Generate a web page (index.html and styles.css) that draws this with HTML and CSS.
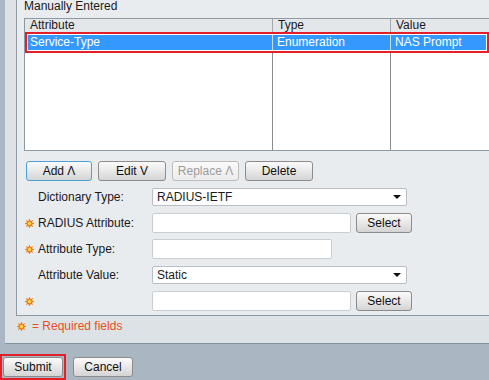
FILE: index.html
```html
<!DOCTYPE html>
<html lang="en">
<head>
  <meta charset="UTF-8" />
  <title>Authorization Profile - Attributes</title>
  <link rel="stylesheet" href="styles.css">
</head>
<body>
  <div class="outer-panel">
    <div class="inner-panel">
      <div class="legend">Manually Entered</div>

      <!-- attribute table -->
      <div class="attr-table">
        <div class="table-row table-head">
          <div class="cell">Attribute</div>
          <div class="cell">Type</div>
          <div class="cell">Value</div>
        </div>
        <div class="selected-box">
          <div class="table-row selected-row">
            <div class="cell">Service-Type</div>
            <div class="cell">Enumeration</div>
            <div class="cell">NAS Prompt</div>
          </div>
        </div>
        <div class="table-row table-fill">
          <div class="cell"></div>
          <div class="cell"></div>
          <div class="cell"></div>
        </div>
      </div>

      <div class="table-actions">
        <button class="btn btn-focus btn-add">Add Λ</button>
        <button class="btn btn-edit">Edit V</button>
        <button class="btn btn-replace" disabled>Replace Λ</button>
        <button class="btn btn-delete">Delete</button>
      </div>

      <!-- attribute form -->
      <div class="attr-form">
        <span class="req"></span>
        <label class="field-label">Dictionary Type:</label>
        <div class="field">
          <div class="dropdown"><span>RADIUS-IETF</span><i class="caret"></i></div>
        </div>

        <span class="req"><svg viewBox="0 0 9 9" width="9" height="9"><use href="#star"/></svg></span>
        <label class="field-label">RADIUS Attribute:</label>
        <div class="field">
          <input class="text-input input-wide" type="text">
          <button class="btn btn-select">Select</button>
        </div>

        <span class="req"><svg viewBox="0 0 9 9" width="9" height="9"><use href="#star"/></svg></span>
        <label class="field-label">Attribute Type:</label>
        <div class="field">
          <input class="text-input input-short" type="text">
        </div>

        <span class="req"></span>
        <label class="field-label">Attribute Value:</label>
        <div class="field">
          <div class="dropdown"><span>Static</span><i class="caret"></i></div>
        </div>

        <span class="req"><svg viewBox="0 0 9 9" width="9" height="9"><use href="#star"/></svg></span>
        <label class="field-label"></label>
        <div class="field">
          <input class="text-input input-wide" type="text">
          <button class="btn btn-select">Select</button>
        </div>
      </div>
    </div>

    <div class="required-note">
      <svg viewBox="0 0 9 9" width="9" height="9"><use href="#star"/></svg>
      <span>= Required fields</span>
    </div>
  </div>

  <div class="page-actions">
    <div class="submit-box"><button class="btn btn-submit">Submit</button></div>
    <button class="btn btn-cancel">Cancel</button>
  </div>

  <svg width="0" height="0" class="defs">
    <defs>
      <g id="star">
        <g fill="#f07d12">
          <circle cx="4.5" cy="4.5" r="3.1"/>
          <rect x="4" y="0" width="1" height="9"/>
          <rect x="0" y="4" width="9" height="1"/>
          <rect x="4" y="0" width="1" height="9" transform="rotate(45 4.5 4.5)"/>
          <rect x="4" y="0" width="1" height="9" transform="rotate(-45 4.5 4.5)"/>
        </g>
        <circle cx="4.5" cy="4.5" r="1.7" fill="#ffd84a"/>
      </g>
    </defs>
  </svg>
</body>
</html>
```

FILE: styles.css
```css
body {
  margin: 0;
  background-color: #aab6c2;
  font-family: "Liberation Sans", Arial, sans-serif;
  font-size: 12px;
  color: #1a1a1a;
  overflow: hidden;
  width: 489px;
  height: 380px;
}

.defs {
  position: absolute;
}

/* panels */
.outer-panel {
  margin-left: 5px;
  padding-left: 11px;
  padding-bottom: 10px;
  background-color: #dde2e6;
  border-bottom: 1px solid #7f96a0;
  width: 520px;
}

.inner-panel {
  background-color: #e9ecee;
  border-left: 1px solid #8e9aa3;
  border-bottom: 1px solid #8e9aa3;
  padding-left: 7px;
  padding-bottom: 3px;
}

.legend {
  height: 14px;
  line-height: 14px;
  margin-top: -1px;
  margin-bottom: 5px;
}

/* table */
.attr-table {
  width: 466px;
  height: 133px;
  box-sizing: border-box;
  border: 1px solid #8e9aa3;
  background-color: #fff;
  display: flex;
  flex-direction: column;
}

.table-row {
  display: grid;
  grid-template-columns: 248px 118px 1fr;
}

.table-row .cell {
  padding-left: 5px;
  border-right: 1px solid #a3a9ae;
  white-space: nowrap;
}

.table-row .cell:last-child {
  border-right: none;
}

.table-head {
  height: 13px;
  line-height: 13px;
  background-color: #e4e7ea;
}

.selected-box {
  border: 2px solid #e3202a;
  padding: 1px;
  background-color: #fff;
}

.selected-row {
  grid-template-columns: 245px 118px 1fr;
  height: 15px;
  line-height: 15px;
  background-color: #3399ff;
  color: #fff;
}

.selected-row .cell {
  padding-left: 2px;
  border-right-color: #c8dcf0;
}

.selected-row .cell + .cell {
  padding-left: 4px;
}

.table-fill {
  flex: 1;
}

.table-fill .cell {
  border-right-color: #8c8c8c;
}

/* buttons */
.btn {
  font-family: "Liberation Sans", Arial, sans-serif;
  font-size: 12px;
  color: #111;
  height: 20px;
  padding: 0;
  border: 1px solid #8c8c8c;
  border-radius: 3px;
  background: linear-gradient(#fbfbfb, #e6e6e6 55%, #d4d4d4);
  cursor: pointer;
}

.btn:disabled {
  color: #9c9c9c;
  border-color: #bcbcbc;
  background: linear-gradient(#fafafa, #ececec);
  cursor: default;
}

.btn-focus {
  border-color: #4e9fd3;
}

.table-actions {
  display: flex;
  gap: 6px;
  margin-top: 10px;
  margin-left: 2px;
}

.btn-add { width: 66px; }
.btn-edit { width: 68px; }
.btn-replace { width: 67px; }
.btn-delete { width: 68px; }

/* form */
.attr-form {
  display: grid;
  grid-template-columns: 13px 114px auto;
  grid-auto-rows: 22px;
  row-gap: 4px;
  margin-top: 5px;
  margin-left: 1px;
  align-items: center;
}

.req {
  display: flex;
  align-items: center;
  height: 9px;
}

.field-label {
  white-space: nowrap;
}

.field {
  display: flex;
  align-items: center;
  gap: 5px;
}

.text-input {
  box-sizing: border-box;
  height: 20px;
  margin: 0;
  border: 1px solid #c9ced2;
  border-radius: 2px;
  background-color: #fff;
  font-family: inherit;
  font-size: 12px;
}

.input-wide { width: 199px; }
.input-short { width: 180px; }

.btn-select {
  width: 56px;
}

.dropdown {
  box-sizing: border-box;
  width: 255px;
  height: 18px;
  line-height: 16px;
  padding-left: 4px;
  border: 1px solid #b9bfc4;
  border-radius: 2px;
  background-color: #fff;
  display: flex;
  justify-content: space-between;
  align-items: center;
}

.caret {
  width: 0;
  height: 0;
  margin-right: 5px;
  border-left: 4px solid transparent;
  border-right: 4px solid transparent;
  border-top: 4px solid #111;
}

/* footer */
.required-note {
  display: flex;
  align-items: center;
  gap: 6px;
  height: 14px;
  margin-top: 3px;
  margin-left: 1px;
  color: #e8501e;
}

.page-actions {
  display: flex;
  align-items: center;
  gap: 7px;
  margin-top: 10px;
}

.submit-box {
  border: 2px solid #e3202a;
  padding: 1px;
}

.btn-submit { width: 60px; }
.btn-cancel { width: 60px; }
```
